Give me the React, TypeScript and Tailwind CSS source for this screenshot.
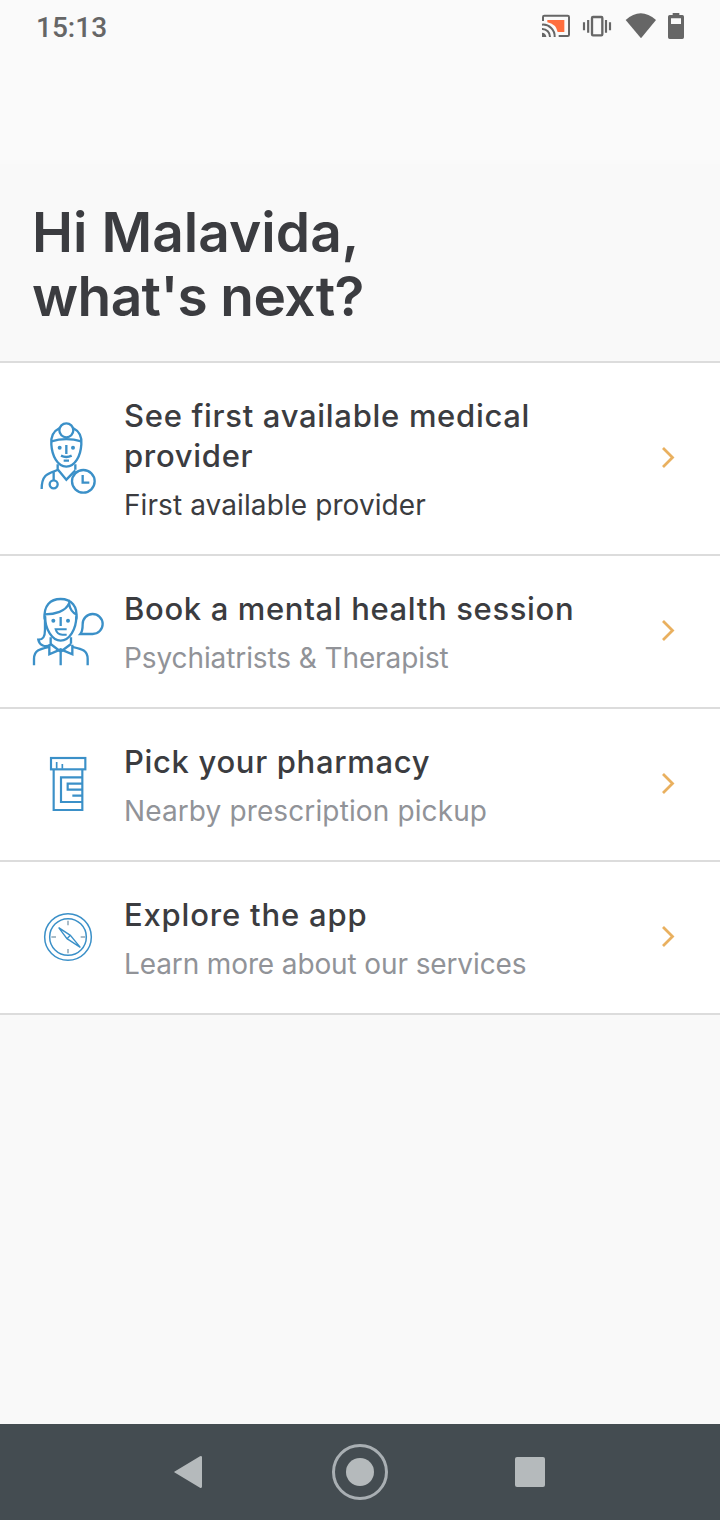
import clsx from 'clsx'

interface Action {
  title: string
  desc: string
  icon: React.ReactNode
  titleClass: string
  descClass: string
}

const ACTIONS: Action[] = [
  {
    title: 'See first available medical provider',
    desc: 'First available provider',
    icon: <DoctorIcon />,
    titleClass: 'tracking-[0.7px]',
    descClass: 'text-[#3b3c40] tracking-[0.09px]',
  },
  {
    title: 'Book a mental health session',
    desc: 'Psychiatrists & Therapist',
    icon: <TherapistIcon />,
    titleClass: 'tracking-[0.65px]',
    descClass: 'text-[#919398] tracking-[-0.1px]',
  },
  {
    title: 'Pick your pharmacy',
    desc: 'Nearby prescription pickup',
    icon: <PillBottleIcon />,
    titleClass: 'tracking-[0.67px]',
    descClass: 'text-[#919398] tracking-[0.12px]',
  },
  {
    title: 'Explore the app',
    desc: 'Learn more about our services',
    icon: <CompassIcon />,
    titleClass: 'tracking-[0.82px]',
    descClass: 'text-[#919398] tracking-[-0.12px]',
  },
]

export default function App() {
  return (
    <div className="flex h-[1520px] w-[720px] flex-col overflow-hidden bg-[#f9f9f9] font-['Inter',sans-serif] text-[#3b3c40]">
      <StatusBar />

      <h1 className="h-[199px] shrink-0 border-b-2 border-[#dcdcdc] pt-[36px] pl-[32px] text-[55px] leading-[64px] font-semibold">
        <span className="block tracking-[0.05px]">Hi Malavida,</span>
        <span className="block tracking-[-0.6px]">what's next?</span>
      </h1>

      <main className="flex-1">
        {ACTIONS.map((a) => (
          <ActionRow key={a.title} {...a} />
        ))}
      </main>

      <NavBar />
    </div>
  )
}

function ActionRow({ title, desc, icon, titleClass, descClass }: Action) {
  return (
    <button className="flex w-full items-center border-b-2 border-[#dcdcdc] bg-white pl-5 text-left">
      <span className="w-[104px] shrink-0">{icon}</span>
      <span className="flex w-[480px] flex-col gap-[9px] pt-[33px] pb-[29px]">
        <span className={clsx('text-[31px] leading-10 font-medium', titleClass)}>{title}</span>
        <span className={clsx('text-[28px] leading-10 font-normal whitespace-nowrap', descClass)}>{desc}</span>
      </span>
      <svg className="ml-auto mr-[44px]" width="16" height="24" viewBox="0 0.5 16 24" fill="none" stroke="#e9b05f" strokeWidth="2.8">
        <path d="M3 1.5 L12.5 11 L3 20.5" />
      </svg>
    </button>
  )
}

function StatusBar() {
  return (
    <header className="flex h-[164px] shrink-0 items-start justify-between bg-[#fafafa] pl-[36px]">
      <span className="mt-[8px] font-['Roboto',sans-serif] text-[28px] leading-10 font-medium text-[#666]">15:13</span>
      <svg width="200" height="60" viewBox="0 0 600 180">
        {/* Cast */}
        <path d="M82 60 H133 V96 H113 Q108 72 82 67 Z" fill="#ff6e3e" />
        <g fill="none" stroke="#666" strokeWidth="6">
          <path d="M69 63 V51 Q69 47 73 47 H143 Q147 47 147 51 V104 Q147 108 143 108 H116" />
          <path d="M66 74 A35 35 0 0 1 104 111" />
          <path d="M66 87 A23 23 0 0 1 90 111" />
        </g>
        <path d="M66 98 A13 13 0 0 1 79 111 H66 Z" fill="#666" />
        {/* Vibrate */}
        <rect x="216" y="51" width="31" height="55" rx="3" fill="none" stroke="#666" strokeWidth="7" />
        <path d="M192 67 V91 M204.5 60 V98 M258 60 V98 M270 67 V91" stroke="#666" strokeWidth="6.5" />
        {/* Wi-Fi */}
        <path d="M317 60 Q362 20 408 60 L363 115 Z" fill="#666" />
        {/* Battery */}
        <path
          d="M458 39 H478 V45 H487 Q492 45 492 50 V112 Q492 117 487 117 H449 Q444 117 444 112 V50 Q444 45 449 45 H458 Z M453 55 V72 H483 V55 Z"
          fill="#666"
          fillRule="evenodd"
        />
      </svg>
    </header>
  )
}

function NavBar() {
  return (
    <nav className="flex h-24 shrink-0 items-center justify-center bg-[#444c51]">
      <svg width="420" height="96" viewBox="0 0 420 96" fill="#b5babc">
        <path d="M25.5 47 L50 32.3 Q52 31.5 52 33.5 V62.5 Q52 64.5 50 63.7 L25.5 49 Q23 48 25.5 47 Z" />
        <circle cx="210" cy="48" r="14" />
        <circle cx="210" cy="48" r="26.5" fill="none" stroke="#a9afb3" strokeWidth="3" />
        <rect x="365" y="33" width="30" height="30" rx="2" />
      </svg>
    </nav>
  )
}

function DoctorIcon() {
  return (
    <svg width="100" height="97" viewBox="0 0 300 291" fill="none" stroke="#3b90c8" strokeWidth="7">
      <circle cx="139" cy="61" r="21" />
      <path d="M119 54 C97 65 92 82 94 103 C96 137 112 169 139 170 C166 169 182 137 184 103 C186 82 181 65 159 54" />
      <path d="M94 94 Q139 81 184 94" />
      <path d="M139 105 V132 M123 137 Q139 145 155 137 M131 152 H147" />
      <circle cx="119" cy="113" r="6" fill="#3b90c8" stroke="none" />
      <circle cx="159" cy="113" r="6" fill="#3b90c8" stroke="none" />
      {/* Collar and stethoscope */}
      <path d="M113 163 V178 L139 209 L166 181 M166 163 V179" />
      <path d="M113 180 C88 190 65 190 65 237 M101 185 V210" />
      <circle cx="101" cy="223" r="12" />
      {/* Clock */}
      <circle cx="190" cy="214" r="34" fill="#fff" />
      <path d="M188 195 V218 H208" />
    </svg>
  )
}

function TherapistIcon() {
  return (
    <svg width="100" height="93" viewBox="0 0 300 279" fill="none" stroke="#3b90c8" strokeWidth="7">
      {/* Hair */}
      <path d="M74 103 C70 62 91 42 122 42 C154 42 174 64 169 103" />
      <path d="M75 88 C105 88 137 79 147 55 Q151 80 169 88" />
      <path d="M75 94 V134 C75 155 70 164 55 164 C58 180 76 190 92 178 V157" />
      {/* Face */}
      <path d="M75 94 C75 133 97 167 122 167 C148 167 169 133 169 94" />
      <path d="M122 96 V123" />
      <path d="M140 133 H107 Q111 149 127 149 H140" strokeWidth="6" />
      <circle cx="100" cy="107" r="6" fill="#3b90c8" stroke="none" />
      <circle cx="144" cy="107" r="6" fill="#3b90c8" stroke="none" />
      {/* Shirt */}
      <path d="M153 157 V176 M92 177 L122 200 L153 177 M122 199 V241" />
      <path d="M88 179 V208 L122 193 L157 208 V179" />
      <path d="M88 186 C60 192 42 195 42 222 V241 M157 186 C185 192 203 195 203 222 V241" />
      {/* Speech bubble */}
      <path d="M181 147 Q188 139 188 118 A30 30 0 1 1 218 147 Z" />
    </svg>
  )
}

function PillBottleIcon() {
  return (
    <svg width="100" height="89" viewBox="-30 0 300 267" fill="none" stroke="#3b90c8" strokeWidth="6.5">
      <rect x="63" y="54" width="103" height="34" />
      <path d="M71 88 V210 H157 V88" />
      <path d="M80 66 V86 M97 72 V86" strokeWidth="5" />
      <path d="M157 112 H93 V186 H157 M157 131 H113 V149 H157 M127 167 H157" />
    </svg>
  )
}

function CompassIcon() {
  return (
    <svg width="100" height="75" viewBox="-30 0 300 225" fill="none" stroke="#3b90c8" strokeWidth="4.5">
      <circle cx="114" cy="111" r="70" />
      <circle cx="114" cy="111" r="55" />
      <path d="M114 62 V76 M114 147 V160 M64 111 H78 M152 111 H166" stroke="#8ea6b6" />
      <path d="M86 83 L121 106 L151 142 L111 116 Z" strokeWidth="4" />
      <path d="M111 116 L121 106" strokeWidth="4" />
    </svg>
  )
}
